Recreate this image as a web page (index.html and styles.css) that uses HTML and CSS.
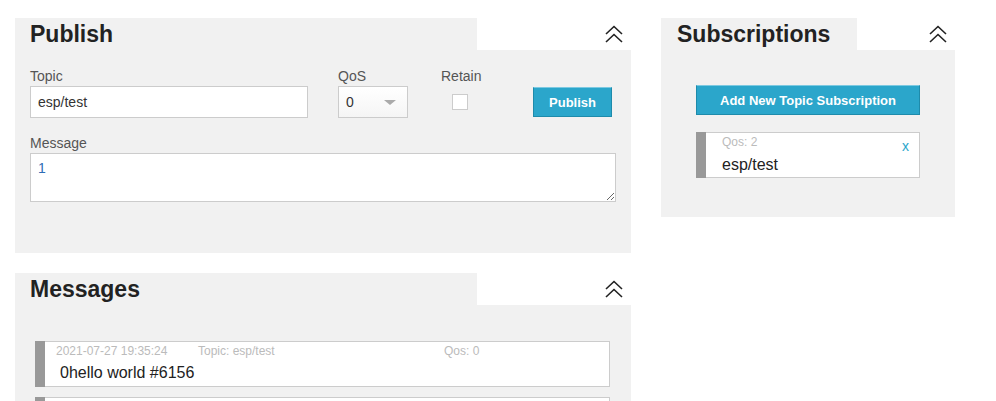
FILE: index.html
```html
<!DOCTYPE html>
<html lang="en">
<head>
    <meta charset="UTF-8">
    <title>MQTT Websocket Client</title>
    <link rel="stylesheet" href="styles.css">
</head>
<body>
    <div class="page">
        <div class="left-col">
            <div class="panel">
                <div class="panel-head">
                    <h2 class="panel-title wide">Publish</h2>
                    <div class="panel-toggle">
                        <svg class="chevrons" viewBox="0 0 18 18">
                            <polyline points="1,9 9,1.5 17,9"/>
                            <polyline points="1,17 9,9.5 17,17"/>
                        </svg>
                    </div>
                </div>
                <div class="panel-body publish-body">
                    <div class="form-row">
                        <div class="field topic-field">
                            <label>Topic</label>
                            <input type="text" class="text-input" value="esp/test">
                        </div>
                        <div class="field qos-field">
                            <label>QoS</label>
                            <div class="select-box">
                                <span>0</span>
                                <span class="select-arrow"></span>
                            </div>
                        </div>
                        <div class="field retain-field">
                            <label>Retain</label>
                            <div class="check-box"></div>
                        </div>
                        <div class="field button-field">
                            <button class="btn publish-btn">Publish</button>
                        </div>
                    </div>
                    <div class="field message-field">
                        <label>Message</label>
                        <textarea class="text-area">1</textarea>
                    </div>
                </div>
            </div>

            <div class="panel messages-panel">
                <div class="panel-head">
                    <h2 class="panel-title wide">Messages</h2>
                    <div class="panel-toggle">
                        <svg class="chevrons" viewBox="0 0 18 18">
                            <polyline points="1,9 9,1.5 17,9"/>
                            <polyline points="1,17 9,9.5 17,17"/>
                        </svg>
                    </div>
                </div>
                <div class="panel-body messages-body">
                    <div class="item message-item">
                        <div class="item-bar"></div>
                        <div class="item-content">
                            <div class="item-meta">
                                <span class="meta-date">2021-07-27 19:35:24</span>
                                <span class="meta-topic">Topic: esp/test</span>
                                <span class="meta-qos">Qos: 0</span>
                            </div>
                            <div class="item-text">0hello world #6156</div>
                        </div>
                    </div>
                    <!-- older message, only its top edge is in view -->
                    <div class="item message-item">
                        <div class="item-bar"></div>
                        <div class="item-content"></div>
                    </div>
                </div>
            </div>
        </div>

        <div class="right-col">
            <div class="panel">
                <div class="panel-head">
                    <h2 class="panel-title narrow">Subscriptions</h2>
                    <div class="panel-toggle">
                        <svg class="chevrons" viewBox="0 0 18 18">
                            <polyline points="1,9 9,1.5 17,9"/>
                            <polyline points="1,17 9,9.5 17,17"/>
                        </svg>
                    </div>
                </div>
                <div class="panel-body subs-body">
                    <button class="btn add-btn">Add New Topic Subscription</button>
                    <div class="item sub-item">
                        <div class="item-bar"></div>
                        <div class="item-content">
                            <div class="sub-qos">Qos: 2</div>
                            <div class="sub-topic">esp/test</div>
                            <span class="sub-close">x</span>
                        </div>
                    </div>
                </div>
            </div>
        </div>
    </div>
</body>
</html>
```

FILE: styles.css
```css
* {
    margin: 0;
    padding: 0;
    box-sizing: border-box;
}

body {
    font-family: "Liberation Sans", Arial, sans-serif;
    background: #fff;
    color: #222;
    height: 401px;
    overflow: hidden;
}

.page {
    display: flex;
    gap: 30px;
    padding: 18px 0 0 15px;
}

.left-col {
    width: 616px;
    display: flex;
    flex-direction: column;
    gap: 20px;
}

.right-col {
    width: 294px;
}

/* panels */
.panel-head {
    display: flex;
    height: 32px;
}

.panel-title {
    background: #f1f1f1;
    font-size: 23px;
    font-weight: bold;
    color: #222;
    padding: 3px 0 0 15px;
    line-height: 27px;
}

.panel-title.wide {
    width: 75%;
}

.panel-title.narrow {
    width: 66.67%;
    padding-left: 16px;
}

.panel-toggle {
    flex: 1;
    display: flex;
    justify-content: flex-end;
    padding: 7px 8px 0 0;
}

.chevrons {
    width: 18px;
    height: 18px;
    fill: none;
    stroke: #222;
    stroke-width: 1.6;
}

.panel-body {
    background: #f1f1f1;
}

/* publish form */
.publish-body {
    height: 203px;
    padding: 18px 15px 0 15px;
}

.form-row {
    display: flex;
    align-items: flex-start;
}

.field label {
    display: block;
    font-size: 14px;
    line-height: 16px;
    color: #555;
    margin-bottom: 2px;
}

.topic-field {
    width: 278px;
    margin-right: 30px;
}

.text-input {
    width: 100%;
    height: 32px;
    border: 1px solid #ccc;
    background: #fff;
    font-family: inherit;
    font-size: 14px;
    color: #333;
    padding: 0 7px;
    outline: none;
}

.qos-field {
    width: 70px;
    margin-right: 33px;
}

.select-box {
    height: 32px;
    border: 1px solid #ccc;
    background: linear-gradient(#fff, #f5f5f5);
    display: flex;
    align-items: center;
    justify-content: space-between;
    padding: 0 11px 0 7px;
    font-size: 14px;
    color: #333;
}

.select-arrow {
    width: 0;
    height: 0;
    border-left: 6px solid transparent;
    border-right: 6px solid transparent;
    border-top: 5px solid #aaa;
}

.retain-field {
    width: 60px;
    margin-right: 32px;
}

.check-box {
    width: 16px;
    height: 16px;
    border: 1px solid #ccc;
    background: #fff;
    margin: 10px 0 0 11px;
}

.button-field {
    padding-top: 19px;
}

.btn {
    background: #2ba6cb;
    color: #fff;
    font-family: inherit;
    font-weight: bold;
    font-size: 13px;
    border: 1px solid #1e8bab;
    border-top-color: #7cc9e1;
    cursor: pointer;
}

.publish-btn {
    width: 79px;
    height: 30px;
}

.message-field {
    margin-top: 17px;
}

.text-area {
    display: block;
    width: 100%;
    height: 49px;
    border: 1px solid #ccc;
    background: #fff;
    font-family: inherit;
    font-size: 14px;
    color: #2f6db5;
    padding: 6px 7px;
    resize: vertical;
    outline: none;
}

/* list items */
.item {
    display: flex;
    height: 46px;
    background: #fff;
    border: 1px solid #ccc;
    border-left: none;
}

.item-bar {
    width: 10px;
    background: #999;
    margin: -1px 0;
}

.item-content {
    position: relative;
    flex: 1;
}

/* messages */
.messages-body {
    height: 96px;
    padding: 36px 21px 0 20px;
    display: flex;
    flex-direction: column;
    gap: 10px;
}

.message-item {
    flex-shrink: 0;
}

.item-meta {
    display: flex;
    font-size: 12px;
    color: #bbb;
    padding: 2px 0 0 11px;
    line-height: 14px;
}

.meta-date {
    width: 142px;
}

.meta-topic {
    width: 246px;
}

.item-text {
    font-size: 16px;
    color: #222;
    padding: 6px 0 0 15px;
}

/* subscriptions */
.subs-body {
    height: 167px;
    padding: 35px 35px 0 35px;
}

.add-btn {
    display: block;
    width: 224px;
    height: 30px;
}

.sub-item {
    margin-top: 17px;
}

.sub-qos {
    font-size: 12px;
    color: #bbb;
    padding: 2px 0 0 16px;
    line-height: 14px;
}

.sub-topic {
    font-size: 16px;
    color: #222;
    padding: 7px 0 0 16px;
}

.sub-close {
    position: absolute;
    top: 5px;
    right: 10px;
    font-size: 14px;
    color: #2ba6cb;
}
```
